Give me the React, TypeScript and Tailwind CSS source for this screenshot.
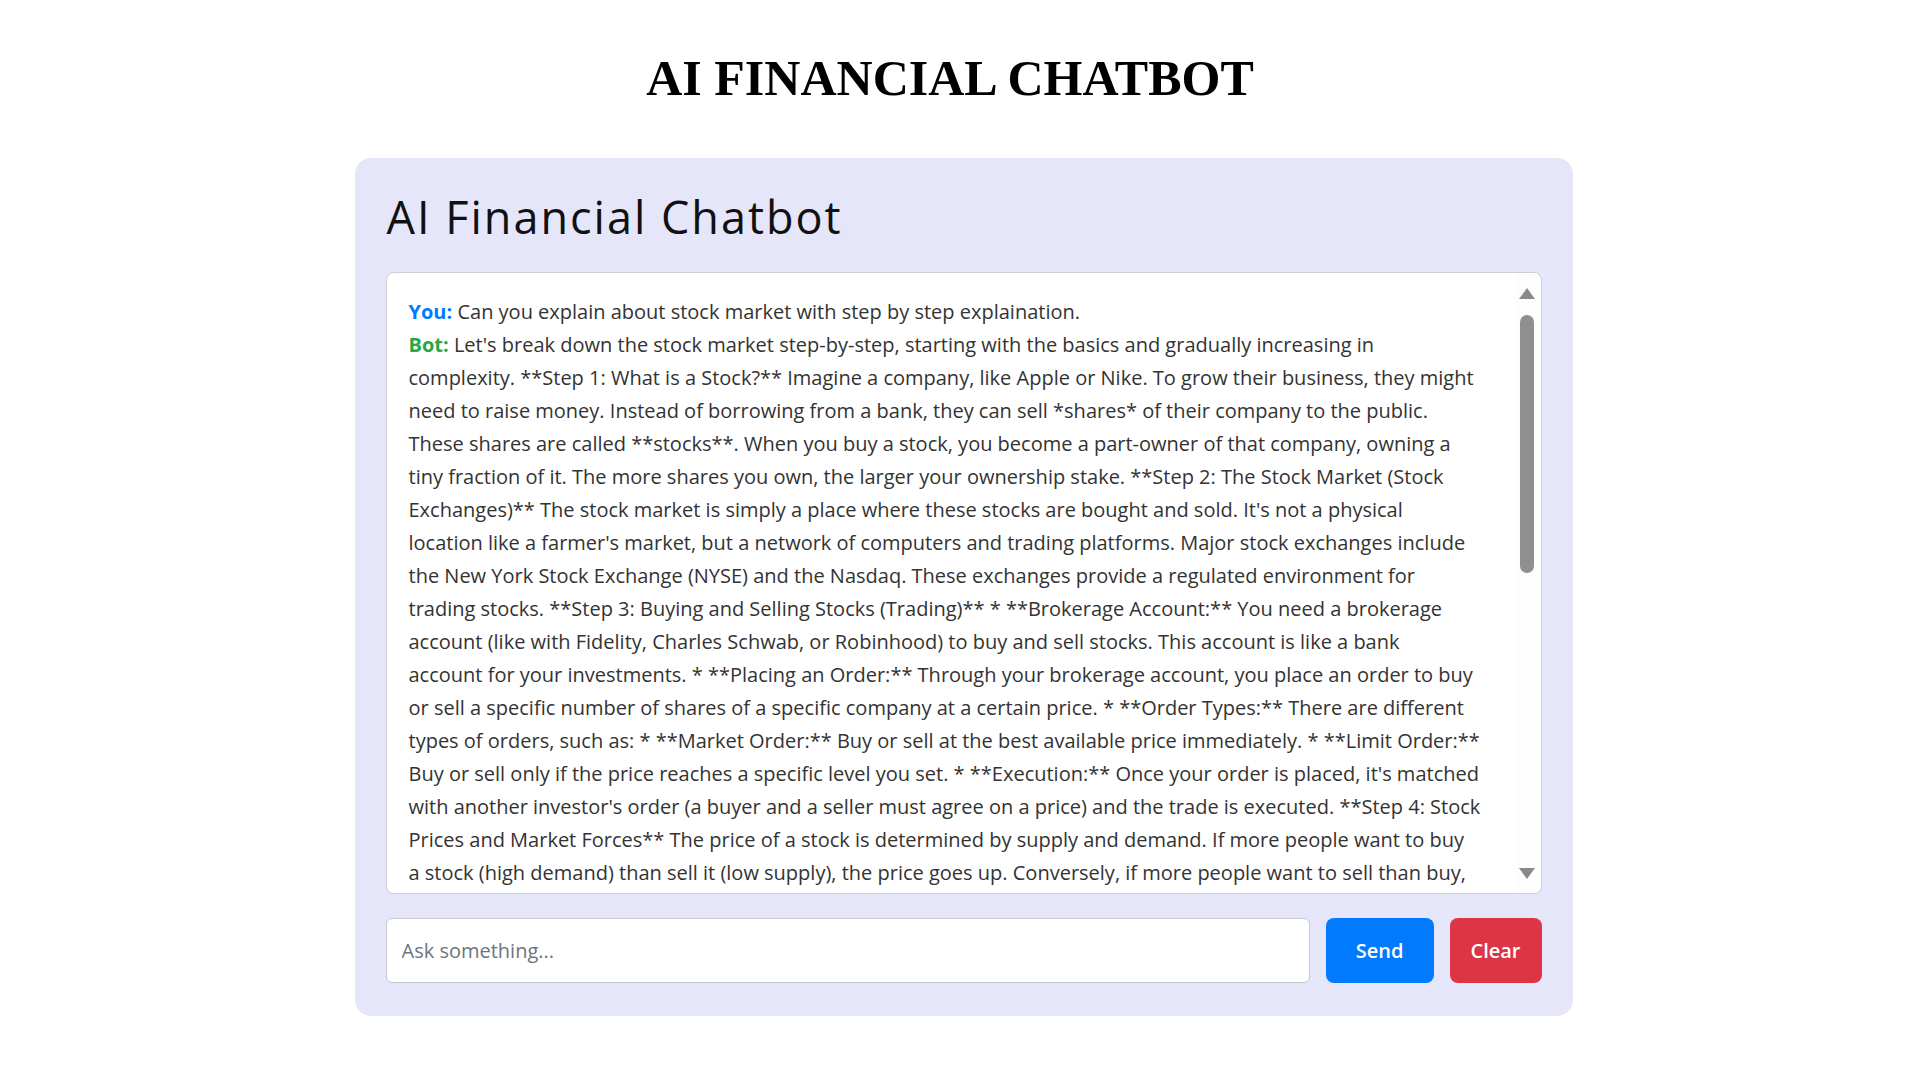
import React from "react";

const lines: string[] = [
  "complexity. **Step 1: What is a Stock?** Imagine a company, like Apple or Nike. To grow their business, they might",
  "need to raise money. Instead of borrowing from a bank, they can sell *shares* of their company to the public.",
  "These shares are called **stocks**. When you buy a stock, you become a part-owner of that company, owning a",
  "tiny fraction of it. The more shares you own, the larger your ownership stake. **Step 2: The Stock Market (Stock",
  "Exchanges)** The stock market is simply a place where these stocks are bought and sold. It's not a physical",
  "location like a farmer's market, but a network of computers and trading platforms. Major stock exchanges include",
  "the New York Stock Exchange (NYSE) and the Nasdaq. These exchanges provide a regulated environment for",
  "trading stocks. **Step 3: Buying and Selling Stocks (Trading)** * **Brokerage Account:** You need a brokerage",
  "account (like with Fidelity, Charles Schwab, or Robinhood) to buy and sell stocks. This account is like a bank",
  "account for your investments. * **Placing an Order:** Through your brokerage account, you place an order to buy",
  "or sell a specific number of shares of a specific company at a certain price. * **Order Types:** There are different",
  "types of orders, such as: * **Market Order:** Buy or sell at the best available price immediately. * **Limit Order:**",
  "Buy or sell only if the price reaches a specific level you set. * **Execution:** Once your order is placed, it's matched",
  "with another investor's order (a buyer and a seller must agree on a price) and the trade is executed. **Step 4: Stock",
  "Prices and Market Forces** The price of a stock is determined by supply and demand. If more people want to buy",
  "a stock (high demand) than sell it (low supply), the price goes up. Conversely, if more people want to sell than buy,",
];

export default function App() {
  return (
    <div className="min-h-screen bg-white flex flex-col items-center">
      <h1
        className="pt-[53px] mb-[55px] mr-[20px] text-[50px] leading-none font-bold text-black text-center"
        style={{ fontFamily: '"Liberation Serif", "Times New Roman", serif' }}
      >
        AI FINANCIAL CHATBOT
      </h1>

      <div className="ml-[7px] w-[1218px] h-[858px] bg-[#e6e6fa] rounded-[16px] pt-[36px] pb-[33px] px-[31px] flex flex-col">
        <h2
          className="text-[45px] leading-none font-normal tracking-[2px] text-[#111] pl-[1px]"
          style={{ fontFamily: '"Open Sans", sans-serif' }}
        >
          AI Financial Chatbot
        </h2>

        <div className="mt-[33px] flex-1 min-h-0 bg-white border border-[#cfcfd6] rounded-[8px] flex overflow-hidden">
          <div
            className="flex-1 min-w-0 overflow-hidden pl-[22px] pt-[22px] text-[20px] leading-[33px] text-[#333]"
            style={{ fontFamily: '"Open Sans", sans-serif' }}
          >
            <div className="whitespace-nowrap">
              <span className="font-bold text-[#007bff]">You:</span> Can you explain about stock market with step by step explaination.
            </div>
            <div className="whitespace-nowrap">
              <span className="font-bold text-[#28a745]">Bot:</span> Let's break down the stock market step-by-step, starting with the basics and gradually increasing in
            </div>
            {lines.map((l, i) => (
              <div key={i} className="whitespace-nowrap">
                {l}
              </div>
            ))}
          </div>
          <div className="w-[22px] mr-[3px] flex flex-col items-center pt-[15px] pb-[14px] bg-[#fdfdfd]">
            <svg width="16" height="11" viewBox="0 0 16 11">
              <path d="M8 0 L16 11 L0 11 Z" fill="#8a8a8a" />
            </svg>
            <div className="mt-[16px] w-[14px] h-[258px] rounded-full bg-[#8f8f8f]" />
            <div className="flex-1" />
            <svg width="16" height="11" viewBox="0 0 16 11">
              <path d="M0 0 L16 0 L8 11 Z" fill="#8a8a8a" />
            </svg>
          </div>
        </div>

        <div className="mt-[24px] flex gap-[16px] h-[65px]">
          <input
            className="flex-1 h-full bg-white border border-[#c8c8d0] rounded-[6px] px-[15px] text-[20px] text-[#333] placeholder:text-[#6c757d] outline-none"
            style={{ fontFamily: '"Open Sans", sans-serif' }}
            placeholder="Ask something..."
          />
          <button
            className="w-[108px] h-full bg-[#007bff] text-white rounded-[8px] text-[20px] font-semibold"
            style={{ fontFamily: '"Open Sans", sans-serif' }}
          >
            Send
          </button>
          <button
            className="w-[92px] h-full bg-[#dc3545] text-white rounded-[8px] text-[20px] font-semibold"
            style={{ fontFamily: '"Open Sans", sans-serif' }}
          >
            Clear
          </button>
        </div>
      </div>
    </div>
  );
}
